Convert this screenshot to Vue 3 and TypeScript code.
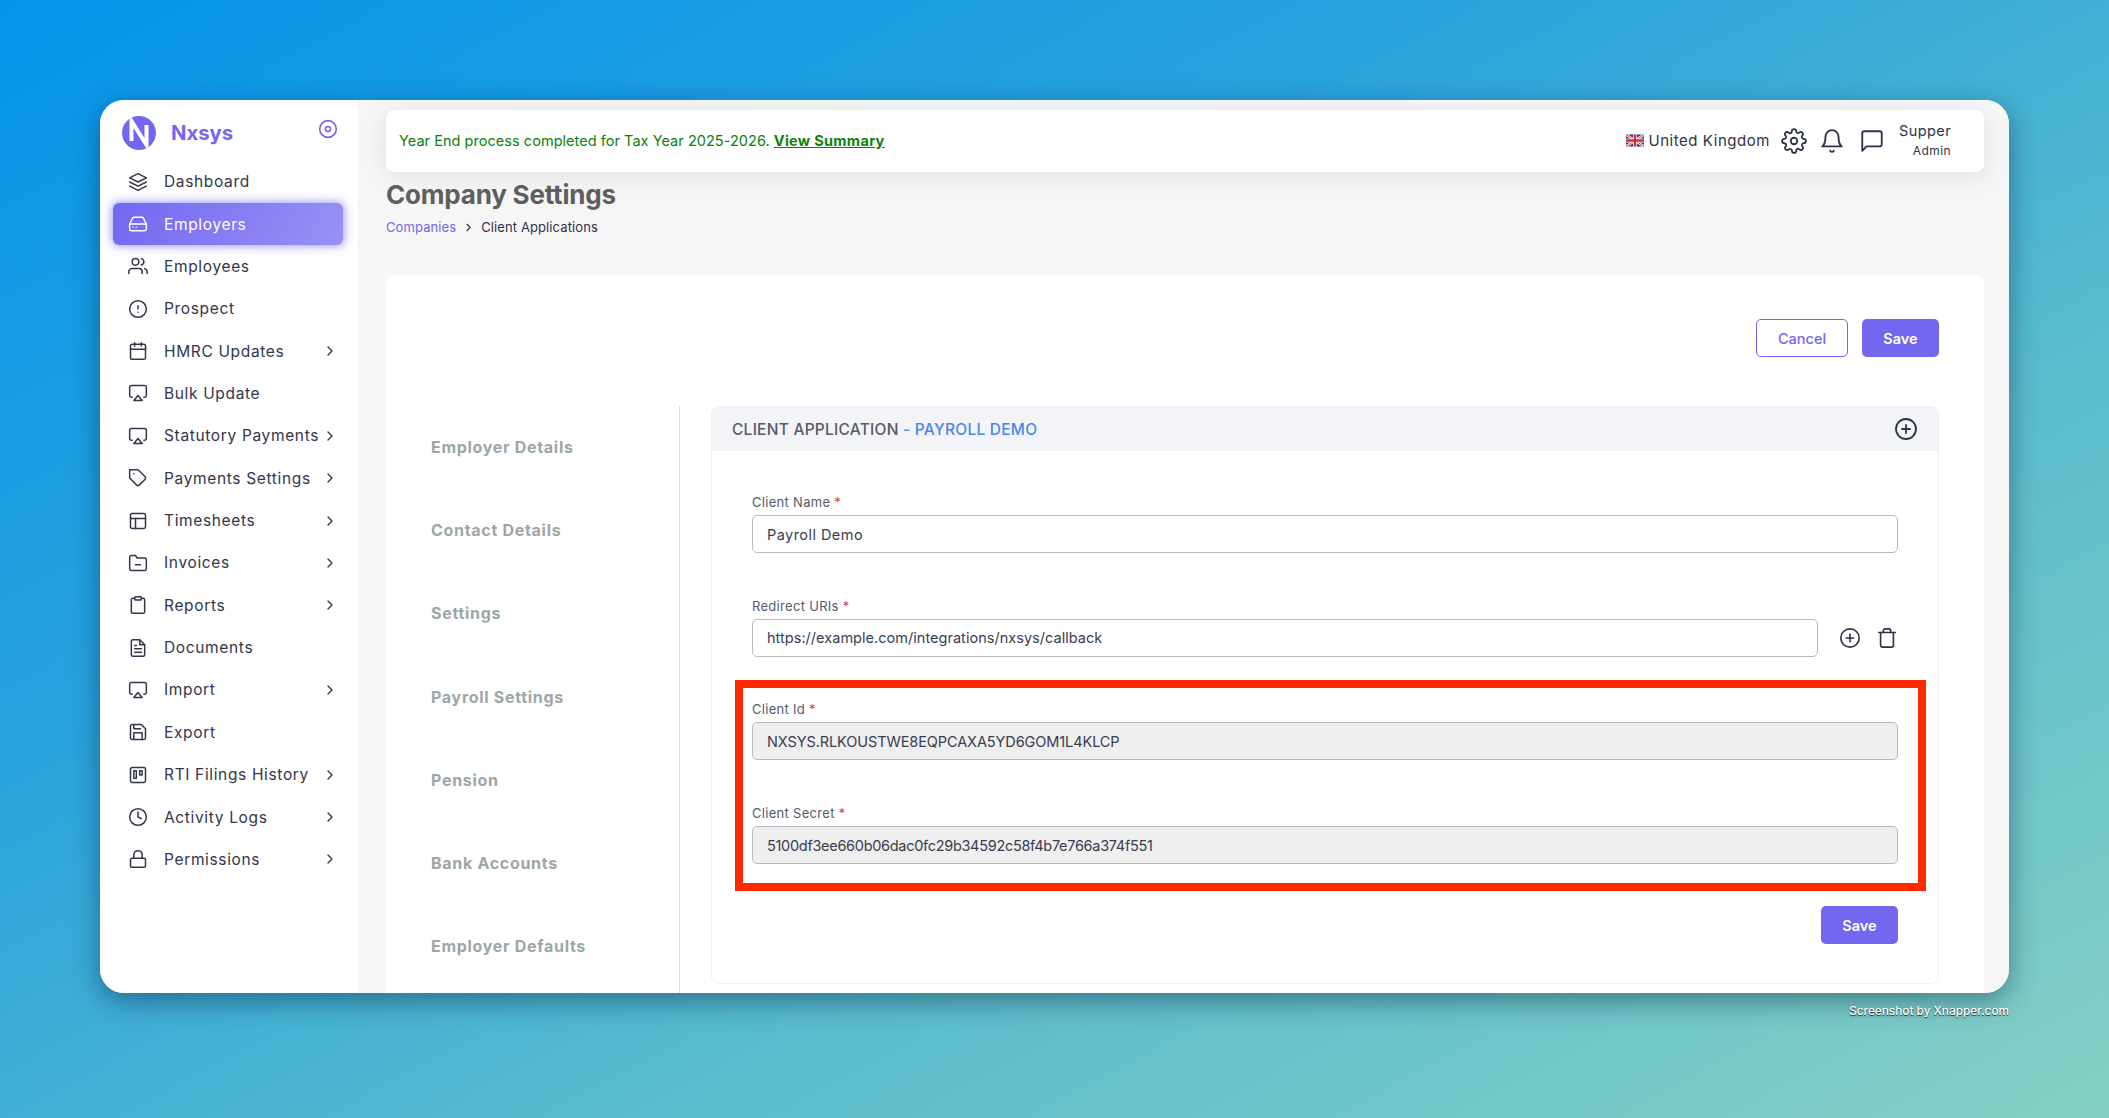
<script setup lang="ts">
const icons: Record<string, string> = {
  layers: '<polygon points="12 2 2 7 12 12 22 7 12 2"/><polyline points="2 17 12 22 22 17"/><polyline points="2 12 12 17 22 12"/>',
  drive: '<line x1="22" y1="12" x2="2" y2="12"/><path d="M5.45 5.11L2 12v6a2 2 0 0 0 2 2h16a2 2 0 0 0 2-2v-6l-3.45-6.89A2 2 0 0 0 16.76 4H7.24a2 2 0 0 0-1.79 1.11z"/><line x1="6" y1="16" x2="6.01" y2="16"/><line x1="10" y1="16" x2="10.01" y2="16"/>',
  users: '<path d="M17 21v-2a4 4 0 0 0-4-4H5a4 4 0 0 0-4 4v2"/><circle cx="9" cy="7" r="4"/><path d="M23 21v-2a4 4 0 0 0-3-3.87"/><path d="M16 3.13a4 4 0 0 1 0 7.75"/>',
  alert: '<circle cx="12" cy="12" r="10"/><line x1="12" y1="8" x2="12" y2="12"/><line x1="12" y1="16" x2="12.01" y2="16"/>',
  calendar: '<rect x="3" y="4" width="18" height="18" rx="2"/><line x1="16" y1="2" x2="16" y2="6"/><line x1="8" y1="2" x2="8" y2="6"/><line x1="3" y1="10" x2="21" y2="10"/>',
  airplay: '<path d="M5 17H4a2 2 0 0 1-2-2V5a2 2 0 0 1 2-2h16a2 2 0 0 1 2 2v10a2 2 0 0 1-2 2h-1"/><polygon points="12 15 17 21 7 21 12 15"/>',
  tag: '<path d="M20.59 13.41l-7.17 7.17a2 2 0 0 1-2.83 0L2 12V2h10l8.59 8.59a2 2 0 0 1 0 2.82z"/><line x1="7" y1="7" x2="7.01" y2="7"/>',
  layout: '<rect x="3" y="3" width="18" height="18" rx="2"/><line x1="3" y1="9" x2="21" y2="9"/><line x1="9" y1="21" x2="9" y2="9"/>',
  folder: '<path d="M22 19a2 2 0 0 1-2 2H4a2 2 0 0 1-2-2V5a2 2 0 0 1 2-2h5l2 3h9a2 2 0 0 1 2 2z"/><line x1="9" y1="14" x2="15" y2="14"/>',
  clipboard: '<path d="M16 4h2a2 2 0 0 1 2 2v14a2 2 0 0 1-2 2H6a2 2 0 0 1-2-2V6a2 2 0 0 1 2-2h2"/><rect x="8" y="2" width="8" height="4" rx="1"/>',
  file: '<path d="M14 2H6a2 2 0 0 0-2 2v16a2 2 0 0 0 2 2h12a2 2 0 0 0 2-2V8z"/><polyline points="14 2 14 8 20 8"/><line x1="16" y1="13" x2="8" y2="13"/><line x1="16" y1="17" x2="8" y2="17"/><polyline points="10 9 9 9 8 9"/>',
  save: '<path d="M19 21H5a2 2 0 0 1-2-2V5a2 2 0 0 1 2-2h11l5 5v11a2 2 0 0 1-2 2z"/><polyline points="17 21 17 13 7 13 7 21"/><polyline points="7 3 7 8 15 8"/>',
  trello: '<rect x="3" y="3" width="18" height="18" rx="2"/><rect x="7" y="7" width="3" height="9"/><rect x="14" y="7" width="3" height="5"/>',
  clock: '<circle cx="12" cy="12" r="10"/><polyline points="12 6 12 12 16 14"/>',
  lock: '<rect x="3" y="11" width="18" height="11" rx="2"/><path d="M7 11V7a5 5 0 0 1 10 0v4"/>',
  disc: '<circle cx="12" cy="12" r="10"/><circle cx="12" cy="12" r="3"/>',
  gear: '<circle cx="12" cy="12" r="3"/><path d="M19.4 15a1.65 1.65 0 0 0 .33 1.82l.06.06a2 2 0 0 1 0 2.83 2 2 0 0 1-2.83 0l-.06-.06a1.65 1.65 0 0 0-1.82-.33 1.65 1.65 0 0 0-1 1.51V21a2 2 0 0 1-2 2 2 2 0 0 1-2-2v-.09A1.65 1.65 0 0 0 9 19.4a1.65 1.65 0 0 0-1.82.33l-.06.06a2 2 0 0 1-2.83 0 2 2 0 0 1 0-2.83l.06-.06a1.65 1.65 0 0 0 .33-1.82 1.65 1.65 0 0 0-1.51-1H3a2 2 0 0 1-2-2 2 2 0 0 1 2-2h.09A1.65 1.65 0 0 0 4.6 9a1.65 1.65 0 0 0-.33-1.82l-.06-.06a2 2 0 0 1 0-2.83 2 2 0 0 1 2.83 0l.06.06a1.65 1.65 0 0 0 1.82.33H9a1.65 1.65 0 0 0 1-1.51V3a2 2 0 0 1 2-2 2 2 0 0 1 2 2v.09a1.65 1.65 0 0 0 1 1.51 1.65 1.65 0 0 0 1.82-.33l.06-.06a2 2 0 0 1 2.83 0 2 2 0 0 1 0 2.83l-.06.06a1.65 1.65 0 0 0-.33 1.82V9a1.65 1.65 0 0 0 1.51 1H21a2 2 0 0 1 2 2 2 2 0 0 1-2 2h-.09a1.65 1.65 0 0 0-1.51 1z"/>',
  bell: '<path d="M18 8A6 6 0 0 0 6 8c0 7-3 9-3 9h18s-3-2-3-9"/><path d="M13.73 21a2 2 0 0 1-3.46 0"/>',
  message: '<path d="M21 15a2 2 0 0 1-2 2H7l-4 4V5a2 2 0 0 1 2-2h14a2 2 0 0 1 2 2z"/>',
  plus: '<circle cx="12" cy="12" r="10"/><line x1="12" y1="8" x2="12" y2="16"/><line x1="8" y1="12" x2="16" y2="12"/>',
  trash: '<polyline points="3 6 5 6 21 6"/><path d="M19 6v14a2 2 0 0 1-2 2H7a2 2 0 0 1-2-2V6m3 0V4a2 2 0 0 1 2-2h4a2 2 0 0 1 2 2v2"/>',
  chevron: '<polyline points="9 18 15 12 9 6"/>'
}

const menu = [
  { label: 'Dashboard', icon: 'layers' },
  { label: 'Employers', icon: 'drive', active: true },
  { label: 'Employees', icon: 'users' },
  { label: 'Prospect', icon: 'alert' },
  { label: 'HMRC Updates', icon: 'calendar', more: true },
  { label: 'Bulk Update', icon: 'airplay' },
  { label: 'Statutory Payments', icon: 'airplay', more: true },
  { label: 'Payments Settings', icon: 'tag', more: true },
  { label: 'Timesheets', icon: 'layout', more: true },
  { label: 'Invoices', icon: 'folder', more: true },
  { label: 'Reports', icon: 'clipboard', more: true },
  { label: 'Documents', icon: 'file' },
  { label: 'Import', icon: 'airplay', more: true },
  { label: 'Export', icon: 'save' },
  { label: 'RTI Filings History', icon: 'trello', more: true },
  { label: 'Activity Logs', icon: 'clock', more: true },
  { label: 'Permissions', icon: 'lock', more: true }
]

const sections = ['Employer Details', 'Contact Details', 'Settings', 'Payroll Settings', 'Pension', 'Bank Accounts', 'Employer Defaults']
</script>

<template>
  <div class="page">
    <div class="window">
      <aside class="sidebar">
        <div class="brand">
          <svg class="logo" viewBox="0 0 34 34">
            <defs><clipPath id="logo-clip"><circle cx="17" cy="17" r="17" /></clipPath></defs>
            <circle cx="17" cy="17" r="17" fill="#7367f0" />
            <g clip-path="url(#logo-clip)">
              <path d="M9.5 25 V5 L24.5 29 V9" fill="none" stroke="#fff" stroke-width="4" stroke-miterlimit="8" />
            </g>
          </svg>
          <span class="brand-name">Nxsys</span>
          <svg class="icon disc" viewBox="0 0 24 24" v-html="icons.disc"></svg>
        </div>
        <nav class="menu">
          <div v-for="item in menu" :key="item.label" class="menu-item" :class="{ active: item.active }">
            <svg class="icon menu-icon" viewBox="0 0 24 24" v-html="icons[item.icon]"></svg>
            <span class="menu-label">{{ item.label }}</span>
            <svg v-if="item.more" class="icon menu-chevron" viewBox="0 0 24 24" v-html="icons.chevron"></svg>
          </div>
        </nav>
      </aside>

      <main class="main">
        <header class="topbar">
          <p class="notice">Year End process completed for Tax Year 2025-2026. <a class="notice-link">View Summary</a></p>
          <div class="top-actions">
            <svg class="flag" viewBox="0 0 60 40">
              <rect width="60" height="40" fill="#2b3a7a" />
              <path d="M0 0 L60 40 M60 0 L0 40" stroke="#fff" stroke-width="8" />
              <path d="M0 0 L60 40 M60 0 L0 40" stroke="#d8283c" stroke-width="3" />
              <path d="M30 0 V40 M0 20 H60" stroke="#fff" stroke-width="13" />
              <path d="M30 0 V40 M0 20 H60" stroke="#d8283c" stroke-width="8" />
            </svg>
            <span class="country">United Kingdom</span>
            <svg class="icon top-icon" viewBox="0 0 24 24" v-html="icons.gear"></svg>
            <svg class="icon top-icon bell" viewBox="0 0 24 24" v-html="icons.bell"></svg>
            <svg class="icon top-icon msg" viewBox="0 0 24 24" v-html="icons.message"></svg>
            <div class="user">
              <span class="user-name">Supper</span>
              <span class="user-role">Admin</span>
            </div>
          </div>
        </header>

        <h1 class="title">Company Settings</h1>
        <div class="crumbs">
          <span class="crumb-link">Companies</span>
          <svg class="icon crumb-sep" viewBox="0 0 24 24" v-html="icons.chevron"></svg>
          <span>Client Applications</span>
        </div>

        <section class="card">
          <div class="card-actions">
            <button class="btn btn-outline">Cancel</button>
            <button class="btn btn-primary">Save</button>
          </div>
          <div class="columns">
            <ul class="sections">
              <li v-for="s in sections" :key="s">{{ s }}</li>
            </ul>
            <div class="panel">
              <div class="panel-head">
                <span>CLIENT APPLICATION <b>- PAYROLL DEMO</b></span>
                <svg class="icon head-plus" viewBox="0 0 24 24" v-html="icons.plus"></svg>
              </div>
              <div class="panel-body">
                <div class="field">
                  <label>Client Name <i>*</i></label>
                  <input class="input text-name" value="Payroll Demo" />
                </div>
                <div class="field">
                  <label>Redirect URIs <i>*</i></label>
                  <div class="uri-row">
                    <input class="input text-url" value="https://example.com/integrations/nxsys/callback" />
                    <svg class="icon row-plus" viewBox="0 0 24 24" v-html="icons.plus"></svg>
                    <svg class="icon row-trash" viewBox="0 0 24 24" v-html="icons.trash"></svg>
                  </div>
                </div>
                <div class="field">
                  <label>Client Id <i>*</i></label>
                  <input class="input text-id" disabled value="NXSYS.RLKOUSTWE8EQPCAXA5YD6GOM1L4KLCP" />
                </div>
                <div class="field">
                  <label>Client Secret <i>*</i></label>
                  <input class="input text-secret" disabled value="5100df3ee660b06dac0fc29b34592c58f4b7e766a374f551" />
                </div>
                <div class="panel-foot">
                  <button class="btn btn-primary">Save</button>
                </div>
                <div class="highlight"></div>
              </div>
            </div>
          </div>
        </section>
      </main>
    </div>
    <div class="credit">Screenshot by Xnapper.com</div>
  </div>
</template>

<style>
html, body { margin: 0; padding: 0; }
</style>

<style scoped>
.page {
  width: 2109px;
  height: 1118px;
  box-sizing: border-box;
  padding: 100px 100px 0;
  overflow: hidden;
  background: linear-gradient(152deg, #0495ea 0%, #2aa3dc 35%, #5abccd 65%, #86d0c5 100%);
  font-family: Inter, "Liberation Sans", sans-serif;
  color: #2f3349;
}
.window {
  display: flex;
  height: 893px;
  border-radius: 24px;
  overflow: hidden;
  background: #f6f6f6;
  box-shadow: 0 8px 28px rgba(0, 30, 60, 0.45);
}
.icon {
  fill: none;
  stroke: currentColor;
  stroke-width: 2;
  stroke-linecap: round;
  stroke-linejoin: round;
  flex: none;
}
.sidebar {
  width: 258px;
  flex: none;
  background: #fff;
  box-sizing: border-box;
  padding-top: 16px;
}
.brand {
  display: flex;
  align-items: center;
  height: 34px;
  padding: 0 20px 0 22px;
  margin-bottom: 10.5px;
}
.logo { width: 34px; height: 34px; flex: none; }
.brand-name {
  margin: -2px 0 0 15px;
  font-size: 20.3px;
  font-weight: 700;
  color: #7367f0;
  flex: 1;
}
.disc { width: 20px; height: 20px; color: #7367f0; margin-top: -9px; }
.menu-item {
  display: flex;
  align-items: center;
  height: 42.36px;
  margin: 0 15px 0 13px;
  padding: 0 5px 0 15px;
  font-size: 15.5px;
  letter-spacing: 0.65px;
  color: #33364a;
  border-radius: 6px;
  box-sizing: border-box;
}
.menu-item.active {
  color: #fff;
  background: linear-gradient(118deg, #7367f0, rgba(115, 103, 240, 0.72));
  box-shadow: 0 0 10px 1px rgba(115, 103, 240, 0.7);
}
.menu-icon { width: 20px; height: 20px; stroke-width: 1.8; }
.menu-label { margin-left: 16px; flex: 1; white-space: nowrap; }
.menu-chevron { width: 16px; height: 16px; stroke-width: 2; }
.main {
  flex: 1;
  min-width: 0;
  padding: 10px 25px 0 28px;
  background: #f6f6f6;
}
.topbar {
  display: flex;
  align-items: center;
  justify-content: space-between;
  height: 62px;
  padding: 0 33px 2px 13px;
  box-sizing: border-box;
  background: #fff;
  border-radius: 8px;
  box-shadow: 0 4px 24px rgba(34, 41, 47, 0.1);
}
.notice {
  margin: 0;
  font-size: 14.5px;
  letter-spacing: 0.04px;
  color: #0a830a;
}
.notice-link { font-weight: 700; letter-spacing: 0.3px; text-decoration: underline; color: #0a830a; }
.top-actions { display: flex; align-items: center; }
.flag { width: 18px; height: 13px; margin-right: 4px; }
.country { font-size: 15px; letter-spacing: 0.55px; margin-right: 11px; }
.top-icon { width: 26px; height: 26px; stroke-width: 1.7; color: #2f3349; margin-top: 1px; }
.bell { margin-left: 12px; }
.msg { margin-left: 14px; }
.user { display: flex; flex-direction: column; align-items: flex-end; margin: 1px 0 0 14px; line-height: 1; }
.user-name { font-size: 14.5px; letter-spacing: 0.4px; }
.user-role { font-size: 12px; letter-spacing: 0.4px; margin-top: 6px; }
.title {
  margin: 7px 0 0;
  font-size: 26px;
  line-height: 32px;
  font-weight: 700;
  letter-spacing: -0.2px;
  color: #5e5e5e;
}
.crumbs {
  display: flex;
  align-items: center;
  margin-top: 6px;
  font-size: 13px;
  line-height: 20px;
  letter-spacing: 0.1px;
}
.crumb-link { color: #7367f0; }
.crumb-sep { width: 13px; height: 13px; margin: 0 6px; }
.card {
  margin-top: 38px;
  height: 800px;
  box-sizing: border-box;
  padding: 44px 45px 0;
  background: #fff;
  border-radius: 8px;
}
.card-actions { display: flex; justify-content: flex-end; gap: 14px; }
.btn {
  height: 38px;
  border-radius: 5px;
  font-family: inherit;
  font-size: 14.5px;
  font-weight: 600;
  box-sizing: border-box;
}
.btn-outline { width: 92px; background: #fff; border: 1px solid #7367f0; color: #7367f0; font-weight: 500; }
.btn-primary { width: 77px; background: #7367f0; border: none; color: #fff; }
.columns { display: flex; margin-top: 49px; }
.sections {
  list-style: none;
  margin: 0;
  padding: 0;
  width: 249px;
  height: 600px;
  flex: none;
  border-right: 1px solid #d9dbde;
  box-sizing: border-box;
  font-size: 16px;
  font-weight: 700;
  letter-spacing: 0.7px;
  color: #9ba7a7;
}
.sections li { height: 83.2px; line-height: 83.2px; white-space: nowrap; }
.panel {
  flex: 1;
  min-width: 0;
  margin-left: 31px;
  height: 578px;
  border: 1px solid #eef0f4;
  border-radius: 8px;
  box-sizing: border-box;
}
.panel-head {
  display: flex;
  align-items: center;
  justify-content: space-between;
  height: 44px;
  padding: 0 20px;
  background: #f3f4f8;
  border-radius: 8px 8px 0 0;
  font-size: 15.5px;
  letter-spacing: 0.25px;
  font-weight: 500;
  color: #5a5a66;
}
.panel-head b { font-weight: 500; color: #4a86f0; }
.head-plus { width: 24px; height: 24px; stroke-width: 1.8; color: #2f3349; }
.panel-body { position: relative; padding: 43px 40px 0; }
.field { margin-bottom: 44.7px; height: 59px; }
.field label {
  display: block;
  height: 21px;
  line-height: 16px;
  font-size: 13px;
  letter-spacing: 0.3px;
  color: #565a6a;
}
.field label i { color: #ea3b3b; font-style: normal; }
.input {
  display: block;
  width: 100%;
  height: 38px;
  box-sizing: border-box;
  padding: 0 14px;
  background: #fff;
  border: 1px solid #b9b9c3;
  border-radius: 5px;
  font-family: inherit;
  font-size: 14.5px;
  color: #3a3d50;
  outline: none;
}
.input:disabled { background: #efefef; opacity: 1; color: #3a3d50; }
.text-name { letter-spacing: 0.45px; }
.text-url { letter-spacing: 0.03px; }
.text-id { letter-spacing: -0.09px; }
.text-secret { letter-spacing: -0.3px; }
.uri-row { display: flex; align-items: center; }
.uri-row .input { flex: 1; min-width: 0; }
.row-plus { width: 22px; height: 22px; margin-left: 21px; stroke-width: 1.8; color: #2f3349; }
.row-trash { width: 22px; height: 22px; margin-left: 15px; stroke-width: 1.8; color: #2f3349; }
.panel-foot { display: flex; justify-content: flex-end; margin-top: -2.7px; }
.highlight {
  position: absolute;
  left: 23px;
  right: 12px;
  top: 229px;
  height: 211px;
  border: 8px solid #ff2a00;
  box-sizing: border-box;
  pointer-events: none;
}
.credit {
  margin-top: 11px;
  text-align: right;
  font-size: 11.8px;
  font-weight: 500;
  line-height: 15px;
  color: #fff;
  text-shadow: 0 1px 1px rgba(0, 0, 0, 0.8);
}
</style>
